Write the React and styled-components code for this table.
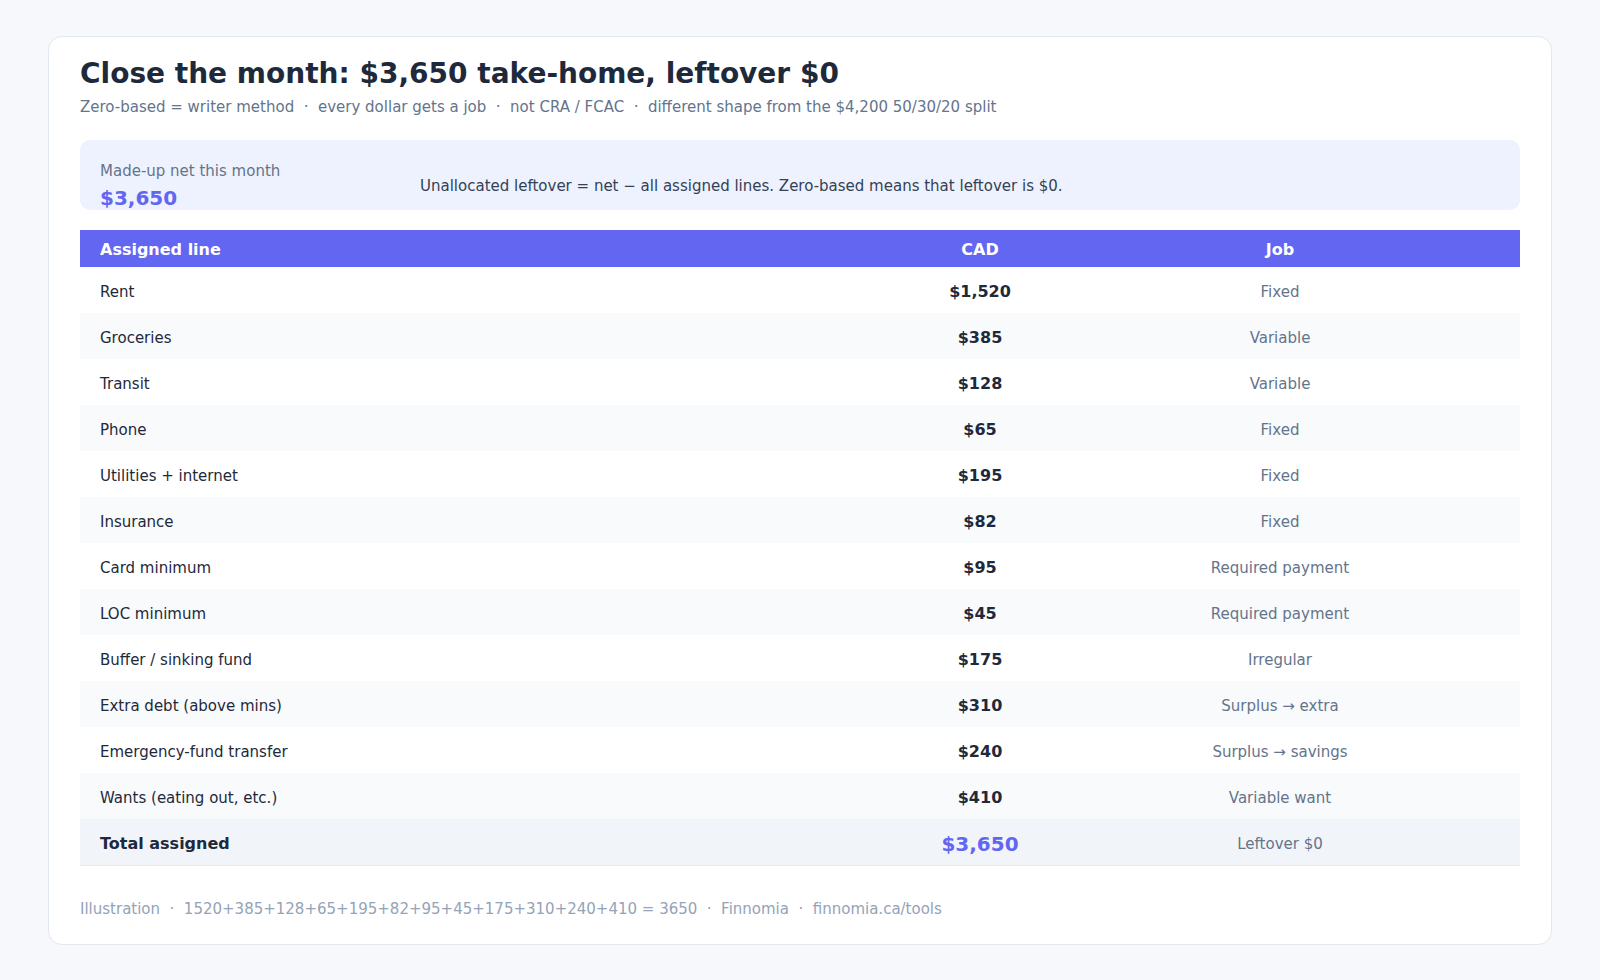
import React from "react";
import styled, { createGlobalStyle } from "styled-components";

const Global = createGlobalStyle`
  html, body { margin: 0; padding: 0; background: #f6f8fb; }
  body { font-family: "DejaVu Sans", Verdana, sans-serif; color: #1e293b; }
  * { box-sizing: border-box; }
`;

const Card = styled.div`
  margin: 36px 48px;
  background: #ffffff;
  border: 1px solid #e2e8f0;
  border-radius: 14px;
  padding: 20px 31px 23px;
`;

const Title = styled.h1`
  margin: 0 0 5px;
  font-size: 28px;
  line-height: 1.2;
  font-weight: 700;
  color: #1e293b;
`;

const Subtitle = styled.p`
  margin: 0;
  font-size: 15px;
  line-height: 1.5;
  color: #64748b;
`;

const Sep = styled.span`
  padding: 0 9.5px;
`;

const Summary = styled.div`
  margin-top: 22px;
  background: #eef2ff;
  border-radius: 10px;
  padding: 21px 20px 0;
  display: grid;
  grid-template-columns: 300px 1fr;
  column-gap: 20px;
  align-items: center;
`;

const SummaryLabel = styled.div`
  font-size: 15px;
  line-height: 21px;
  color: #64748b;
`;

const SummaryValue = styled.div`
  margin-top: 4px;
  font-size: 20px;
  line-height: 24px;
  font-weight: 700;
  color: #6366f1;
`;

const SummaryNote = styled.div`
  padding-top: 2px;
  font-size: 15px;
  line-height: 1.5;
  color: #334155;
`;

const Table = styled.div`
  margin-top: 20px;
  display: grid;
  grid-template-columns: 7fr 1fr 4fr;
`;

const HeadCell = styled.div`
  background: #6366f1;
  color: #ffffff;
  font-size: 16px;
  font-weight: 700;
  line-height: 17px;
  padding: 11px 20px 9px;
  text-align: ${(p) => p.$align || "left"};
  white-space: nowrap;
`;

const Cell = styled.div`
  background: ${(p) => (p.$total ? "#f1f5f9" : p.$alt ? "#f8fafc" : "#ffffff")};
  border-bottom: ${(p) => (p.$total ? "1px solid #e2e8f0" : "none")};
  padding: 14px 20px 10px;
  line-height: 22px;
  font-size: 15px;
  text-align: ${(p) => p.$align || "left"};
  white-space: nowrap;
  color: #1e293b;
`;

const LineName = styled(Cell)``;

const Amount = styled(Cell)`
  font-size: ${(p) => (p.$total ? "20px" : "16px")};
  font-weight: 700;
  color: ${(p) => (p.$total ? "#6366f1" : "#1e293b")};
  padding-left: 0;
  padding-right: 0;
`;

const Job = styled(Cell)`
  color: #64748b;
`;

const TotalLabel = styled(Cell)`
  font-size: 16px;
  font-weight: 700;
`;

const Footer = styled.p`
  margin: 32px 0 0;
  font-size: 15px;
  line-height: 1.5;
  color: #94a3b8;
`;

const rows = [
  ["Rent", "$1,520", "Fixed"],
  ["Groceries", "$385", "Variable"],
  ["Transit", "$128", "Variable"],
  ["Phone", "$65", "Fixed"],
  ["Utilities + internet", "$195", "Fixed"],
  ["Insurance", "$82", "Fixed"],
  ["Card minimum", "$95", "Required payment"],
  ["LOC minimum", "$45", "Required payment"],
  ["Buffer / sinking fund", "$175", "Irregular"],
  ["Extra debt (above mins)", "$310", "Surplus \u2192 extra"],
  ["Emergency-fund transfer", "$240", "Surplus \u2192 savings"],
  ["Wants (eating out, etc.)", "$410", "Variable want"],
];

const subtitleParts = [
  "Zero-based = writer method",
  "every dollar gets a job",
  "not CRA / FCAC",
  "different shape from the $4,200 50/30/20 split",
];

const footerParts = [
  "Illustration",
  "1520+385+128+65+195+82+95+45+175+310+240+410 = 3650",
  "Finnomia",
  "finnomia.ca/tools",
];

function Joined({ parts }) {
  return parts.map((p, i) => (
    <React.Fragment key={i}>
      {i > 0 && <Sep>·</Sep>}
      {p}
    </React.Fragment>
  ));
}

export default function App() {
  return (
    <>
      <Global />
      <Card>
        <Title>Close the month: $3,650 take-home, leftover $0</Title>
        <Subtitle>
          <Joined parts={subtitleParts} />
        </Subtitle>

        <Summary>
          <div>
            <SummaryLabel>Made-up net this month</SummaryLabel>
            <SummaryValue>$3,650</SummaryValue>
          </div>
          <SummaryNote>
            Unallocated leftover = net − all assigned lines. Zero-based means that leftover is $0.
          </SummaryNote>
        </Summary>

        <Table>
          <HeadCell>Assigned line</HeadCell>
          <HeadCell $align="center">CAD</HeadCell>
          <HeadCell $align="center">Job</HeadCell>
          {rows.map(([name, amt, job], i) => {
            const alt = i % 2 === 1;
            return (
              <React.Fragment key={name}>
                <LineName $alt={alt}>{name}</LineName>
                <Amount $alt={alt} $align="center">{amt}</Amount>
                <Job $alt={alt} $align="center">{job}</Job>
              </React.Fragment>
            );
          })}
          <TotalLabel $total>Total assigned</TotalLabel>
          <Amount $total $align="center">$3,650</Amount>
          <Job $total $align="center">Leftover $0</Job>
        </Table>

        <Footer>
          <Joined parts={footerParts} />
        </Footer>
      </Card>
    </>
  );
}
